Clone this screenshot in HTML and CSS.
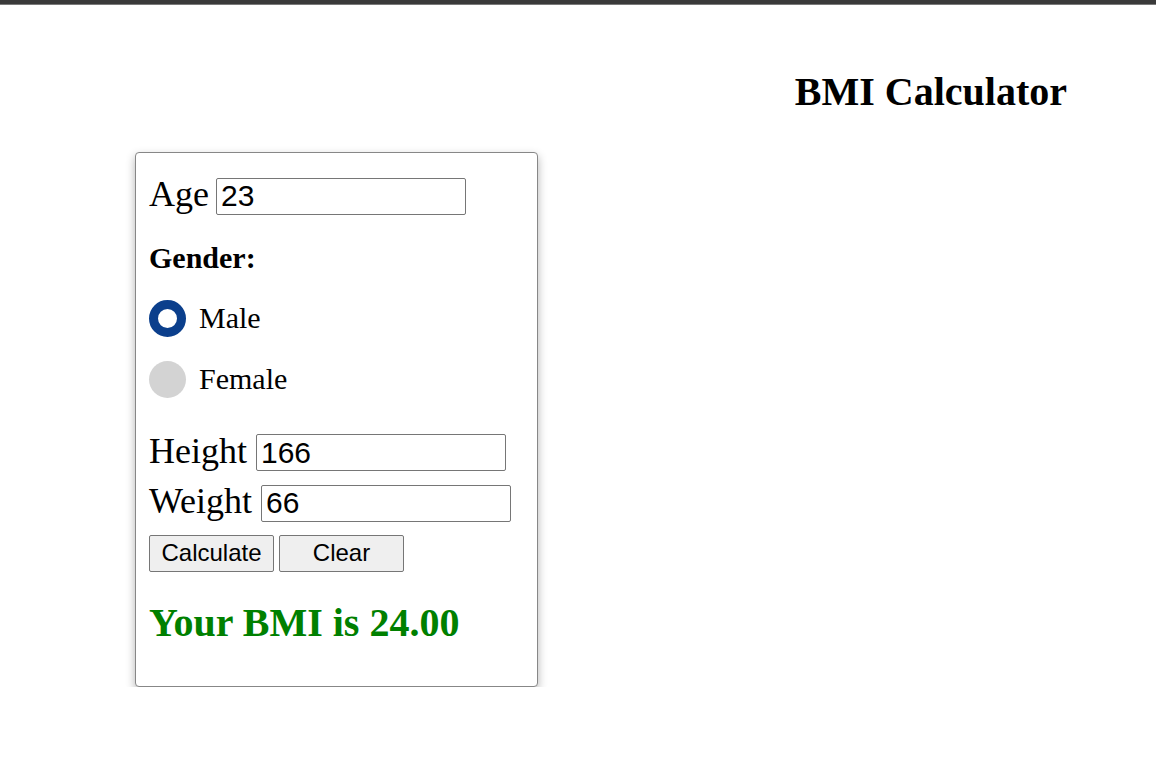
FILE: index.html
```html
<!DOCTYPE html>
<html lang="en">
<head>
<meta charset="utf-8">
<title>BMI Calculator</title>
<link rel="stylesheet" href="styles.css">
</head>
<body>
<div class="topbar"></div>
<header class="header">
  <h1 class="title">BMI Calculator</h1>
</header>
<main class="main">
  <form class="card">
    <div class="row row-age"><label class="field-label" for="age">Age</label> <input class="field-input field-input-age" id="age" type="text" value="23"></div>
    <div class="gender-title">Gender:</div>
    <label class="radio-row radio-male"><input class="radio" type="radio" name="gender" checked><span class="radio-text">Male</span></label>
    <label class="radio-row radio-female"><input class="radio" type="radio" name="gender"><span class="radio-text">Female</span></label>
    <div class="row row-height"><label class="field-label" for="height">Height</label> <input class="field-input" id="height" type="text" value="166"></div>
    <div class="row row-weight"><label class="field-label" for="weight">Weight</label> <input class="field-input" id="weight" type="text" value="66"></div>
    <div class="buttons">
      <button class="btn" type="button">Calculate</button>
      <button class="btn" type="button">Clear</button>
    </div>
    <div class="result">Your BMI is 24.00</div>
  </form>
</main>
</body>
</html>
```
FILE: styles.css
```css
html, body {
  margin: 0;
  padding: 0;
  background: #ffffff;
}

body {
  font-family: "Liberation Serif", "Times New Roman", serif;
  color: #000000;
}

.topbar {
  height: 4px;
  background: #3a3a3a;
  border-bottom: 1px solid #7a7a7a;
}

.header {
  display: flex;
  justify-content: flex-end;
  padding: 64px 89px 0 0;
}

.title {
  margin: 0;
  font-size: 40px;
  line-height: 46px;
  font-weight: bold;
}

.main {
  padding: 37px 0 0 135px;
}

.card {
  box-sizing: border-box;
  width: 403px;
  height: 535px;
  border: 1px solid #878787;
  border-radius: 4px;
  box-shadow: 0 4px 10px rgba(0, 0, 0, 0.3);
  padding: 23px 13px 0 13px;
  background: #ffffff;
}

.row {
  font-size: 36px;
  line-height: 37px;
}

.field-label {
  font-size: 36px;
}

.field-input {
  box-sizing: border-box;
  width: 250px;
  height: 37px;
  margin: 0;
  padding: 1px 4px;
  border: 1px solid #767676;
  border-radius: 2px;
  font-family: "Liberation Sans", Arial, sans-serif;
  font-size: 30px;
  color: #000000;
  background: #ffffff;
  vertical-align: baseline;
}

.field-input-age {
  margin-left: -2px;
}

.gender-title {
  margin-top: 26px;
  font-size: 30px;
  line-height: 34px;
  font-weight: bold;
}

.radio-row {
  display: flex;
  align-items: center;
  gap: 13px;
  height: 37px;
  font-size: 30px;
  line-height: 37px;
}

.radio-male {
  margin-top: 25px;
}

.radio-female {
  margin-top: 24px;
}

.radio-text {
  position: relative;
  top: -1px;
}

.radio {
  appearance: none;
  -webkit-appearance: none;
  box-sizing: border-box;
  width: 37px;
  height: 37px;
  margin: 0;
  border-radius: 50%;
  background: #d3d3d3;
  flex: none;
}

.radio:checked {
  background: #ffffff;
  border: 9px solid #0b3f8c;
}

.row-height {
  margin-top: 35px;
}

.row-weight {
  margin-top: 12px;
}

.buttons {
  display: flex;
  gap: 5px;
  margin-top: 13px;
}

.btn {
  box-sizing: border-box;
  width: 125px;
  height: 37px;
  margin: 0;
  padding: 1px 6px;
  border: 1px solid #767676;
  border-radius: 2px;
  background: #efefef;
  font-family: "Liberation Sans", Arial, sans-serif;
  font-size: 24px;
  color: #000000;
}

.result {
  margin-top: 28px;
  font-size: 40px;
  line-height: 46px;
  font-weight: bold;
  color: #008000;
}
```
